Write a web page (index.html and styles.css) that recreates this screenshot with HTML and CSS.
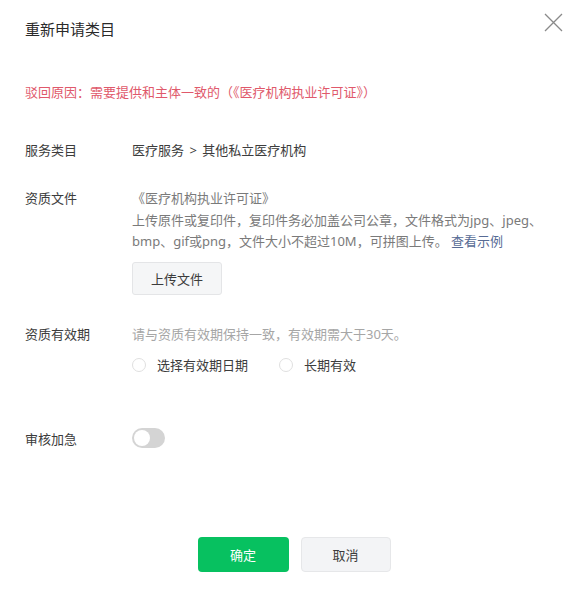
FILE: index.html
```html
<!DOCTYPE html>
<html lang="zh-CN">
<head>
<meta charset="utf-8">
<title>重新申请类目</title>
<link rel="stylesheet" href="styles.css">
</head>
<body>
<div class="dialog">
  <div class="header">
    <div class="title">重新申请类目</div>
    <button class="close" aria-label="关闭">
      <svg width="19" height="19" viewBox="0 0 19 19"><path d="M1 1 L18 18 M18 1 L1 18" stroke="#8a8a8a" stroke-width="1.3" fill="none"/></svg>
    </button>
  </div>
  <div class="reject">驳回原因：需要提供和主体一致的（《医疗机构执业许可证》）</div>

  <div class="row row-service">
    <div class="label">服务类目</div>
    <div class="value">医疗服务 <span class="sep">&gt;</span> 其他私立医疗机构</div>
  </div>

  <div class="row row-file">
    <div class="label">资质文件</div>
    <div class="field">
      <div class="desc">《医疗机构执业许可证》</div>
      <div class="desc">上传原件或复印件，复印件务必加盖公司公章，文件格式为jpg、jpeg、</div>
      <div class="desc">bmp、gif或png，文件大小不超过10M，可拼图上传。 <a class="link">查看示例</a></div>
      <button class="upload">上传文件</button>
    </div>
  </div>

  <div class="row row-valid">
    <div class="label">资质有效期</div>
    <div class="field">
      <div class="hint">请与资质有效期保持一致，有效期需大于30天。</div>
      <div class="radios">
        <label class="radio"><span class="circle"></span><span>选择有效期日期</span></label>
        <label class="radio"><span class="circle"></span><span>长期有效</span></label>
      </div>
    </div>
  </div>

  <div class="row row-urgent">
    <div class="label">审核加急</div>
    <div class="switch"><span class="knob"></span></div>
  </div>

  <div class="footer">
    <button class="btn btn-primary">确定</button>
    <button class="btn btn-default">取消</button>
  </div>
</div>
</body>
</html>
```
FILE: styles.css
```css
* { box-sizing: border-box; }
html, body { margin: 0; padding: 0; background: #fff; }
body {
  font-family: "Noto Sans", "Noto Sans CJK SC", sans-serif;
  font-size: 13px;
  color: #3c3c3c;
}
.dialog {
  width: 586px;
  padding: 0 23px 0 25px;
}
.header {
  display: flex;
  justify-content: space-between;
  align-items: flex-start;
  padding-top: 12px;
}
.title {
  font-size: 15px;
  line-height: 20px;
  margin-top: 7px;
  color: #2a2a2a;
}
.close {
  border: 0;
  background: none;
  padding: 0;
  width: 19px;
  height: 19px;
  margin-top: 1px;
  cursor: pointer;
  display: block;
}
.close svg { display: block; }
.reject {
  margin-top: 43px;
  line-height: 20px;
  color: #e0596b;
}
.row {
  display: flex;
  align-items: flex-start;
}
.label {
  width: 107px;
  flex: none;
  line-height: 20px;
  color: #3c3c3c;
}
.value { line-height: 20px; color: #3c3c3c; }
.sep { margin: 0 2px; }
.row-service { margin-top: 38px; }
.row-file { margin-top: 28px; }
.row-file .label { line-height: 21.5px; }
.field { flex: 1; }
.desc {
  line-height: 21.5px;
  color: #7a7a7a;
  white-space: nowrap;
}
.link { color: #576b95; text-decoration: none; }
.upload {
  margin-top: 9px;
  width: 90px;
  height: 33px;
  border: 1px solid #e4e5e7;
  border-radius: 3px;
  background: #f5f6f7;
  font-family: inherit;
  font-size: 13px;
  color: #3c3c3c;
  padding: 0;
  display: block;
}
.row-valid { margin-top: 29px; }
.row-valid .label { line-height: 21.5px; }
.hint { line-height: 21.5px; color: #a6a6a6; }
.radios {
  display: flex;
  margin-top: 10px;
  gap: 31px;
}
.radio {
  display: flex;
  align-items: center;
  height: 20px;
  gap: 11px;
  color: #3c3c3c;
  line-height: 20px;
}
.circle {
  width: 14px;
  height: 14px;
  border: 1px solid #e0e0e0;
  border-radius: 50%;
  background: #fff;
  flex: none;
}
.row-urgent {
  margin-top: 54px;
  align-items: center;
}
.switch {
  width: 33px;
  height: 20px;
  border-radius: 10px;
  background: #d4d4d4;
  padding: 2px;
  margin-top: -2px;
}
.knob {
  display: block;
  width: 16px;
  height: 16px;
  border-radius: 50%;
  background: #fff;
}
.footer {
  display: flex;
  justify-content: center;
  gap: 12px;
  margin-top: 88px;
}
.btn {
  width: 91px;
  height: 35px;
  border-radius: 4px;
  font-family: inherit;
  font-size: 13px;
  padding: 0;
}
.btn-primary {
  background: #07c160;
  border: 0;
  color: #fff;
}
.btn-default {
  background: #f3f4f6;
  border: 1px solid #e6e7e9;
  color: #3c3c3c;
  width: 90px;
}
```
